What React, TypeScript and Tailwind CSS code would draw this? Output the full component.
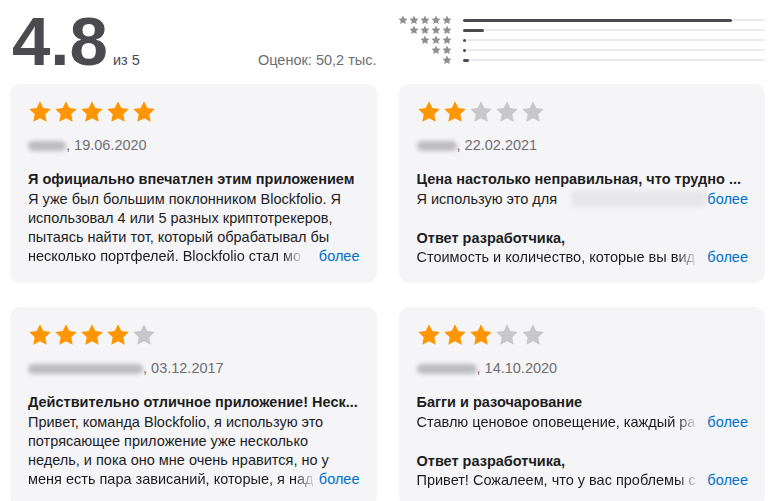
import React from 'react';

const ORANGE = '#ff9500';
const GRAY_STAR = '#c7c7cc';

const Star: React.FC<{ size: number; color: string }> = ({ size, color }) => (
  <svg width={size} height={size} viewBox="0 0 24 24" className="shrink-0">
    <path
      d="M12 1.2l3.3 6.9 7.5 1-5.5 5.2 1.4 7.5L12 18.2l-6.7 3.6 1.4-7.5L1.2 9.1l7.5-1z"
      fill={color}
    />
  </svg>
);

const Stars: React.FC<{ rating: number }> = ({ rating }) => (
  <div className="flex gap-[2px]">
    {[1, 2, 3, 4, 5].map(i => (
      <Star key={i} size={24} color={i <= rating ? ORANGE : GRAY_STAR} />
    ))}
  </div>
);

const histogram = [
  { stars: 5, pct: 89 },
  { stars: 4, pct: 7 },
  { stars: 3, pct: 1 },
  { stars: 2, pct: 1 },
  { stars: 1, pct: 2 },
];

// blurred nickname placeholder
const Nick: React.FC<{ w: number }> = ({ w }) => (
  <span
    className="inline-block h-[10px] rounded-full bg-[#bcbcc1] blur-[2px] align-middle"
    style={{ width: w }}
  />
);

const More: React.FC = () => <span className="text-[#0070c9] shrink-0">более</span>;

// last visible line: text fades out, then "более"
const FadeLine: React.FC<{ text: string }> = ({ text }) => (
  <div className="flex">
    <span className="shrink-0 whitespace-nowrap [mask-image:linear-gradient(to_right,black_calc(100%-18px),rgba(0,0,0,0.15))]">
      {text}
    </span>
    <span className="flex-1" />
    <More />
  </div>
);

interface Review {
  rating: number;
  nick: number;
  date: string;
  title: string;
  lines?: string[];
  last?: React.ReactNode;
  reply?: string;
}

const reviews: Review[] = [
  {
    rating: 5,
    nick: 38,
    date: '19.06.2020',
    title: 'Я официально впечатлен этим приложением',
    lines: [
      'Я уже был большим поклонником Blockfolio. Я',
      'использовал 4 или 5 разных криптотрекеров,',
      'пытаясь найти тот, который обрабатывал бы',
    ],
    last: <FadeLine text="несколько портфелей. Blockfolio стал мо" />,
  },
  {
    rating: 2,
    nick: 40,
    date: '22.02.2021',
    title: 'Цена настолько неправильная, что трудно ...',
    last: (
      <div className="flex items-center">
        <span className="whitespace-nowrap">Я использую это для</span>
        <span className="ml-[15px] h-[16px] w-[134px] bg-[#e6e6e9] blur-[2px]" />
        <span className="flex-1" />
        <More />
      </div>
    ),
    reply: 'Стоимость и количество, которые вы вид',
  },
  {
    rating: 4,
    nick: 115,
    date: '03.12.2017',
    title: 'Действительно отличное приложение! Неск...',
    lines: [
      'Привет, команда Blockfolio, я использую это',
      'потрясающее приложение уже несколько',
      'недель, и пока оно мне очень нравится, но у',
    ],
    last: <FadeLine text="меня есть пара зависаний, которые, я над" />,
  },
  {
    rating: 3,
    nick: 60,
    date: '14.10.2020',
    title: 'Багги и разочарование',
    last: <FadeLine text="Ставлю ценовое оповещение, каждый ра" />,
    reply: 'Привет! Сожалеем, что у вас проблемы с',
  },
];

const ReviewCard: React.FC<{ r: Review }> = ({ r }) => (
  <div className="h-[199px] rounded-[10px] bg-[#f5f5f7] pl-[18px] pr-[17px] pt-[16px] text-[14.5px] leading-[19.3px] text-[#1d1d1f]">
    <Stars rating={r.rating} />
    <div className="mt-[12px] flex items-center text-[#6e6e73]">
      <Nick w={r.nick} />
      <span>, {r.date}</span>
    </div>
    <div className="mt-[15px] font-bold whitespace-nowrap">{r.title}</div>
    {r.lines?.map(l => (
      <div key={l} className="whitespace-nowrap">{l}</div>
    ))}
    {r.last}
    {r.reply && (
      <>
        <div className="mt-[20px] font-bold">Ответ разработчика,</div>
        <FadeLine text={r.reply} />
      </>
    )}
  </div>
);

export default function App() {
  return (
    <div className="h-[501px] w-[775px] overflow-hidden bg-white px-[10px] font-['Liberation_Sans',Arial,sans-serif]">
      <div className="grid h-[84px] grid-cols-2 gap-x-[22px]">
        <div className="flex items-end pb-[15px]">
          <span className="ml-[2px] text-[69px] font-bold leading-[54px] text-[#4a4a4f]">4.8</span>
          <span className="ml-[5px] mb-[-3px] text-[14.5px] text-[#4a4a4f]">из 5</span>
          <span className="flex-1" />
          <span className="mb-[-3px] text-[14.5px] text-[#6e6e73]">Оценок: 50,2 тыс.</span>
        </div>
        <div className="flex flex-col pt-[15px]">
          {histogram.map(h => (
            <div key={h.stars} className="flex h-[10px] items-center">
              <div className="flex w-[53px] justify-end">
                {Array.from({ length: h.stars }).map((_, i) => (
                  <span key={i} className="ml-[1px]">
                    <Star size={10} color="#8e8e93" />
                  </span>
                ))}
              </div>
              <div className="relative ml-[11px] h-[2px] flex-1 bg-[#ebebef]">
                <div
                  className="absolute left-0 top-[-0.5px] h-[3px] rounded-full bg-[#4a4a4f]"
                  style={{ width: `${h.pct}%`, minWidth: 3 }}
                />
              </div>
            </div>
          ))}
        </div>
      </div>
      <div className="grid grid-cols-2 gap-x-[22px] gap-y-[24px]">
        {reviews.map((r, i) => (
          <ReviewCard key={i} r={r} />
        ))}
      </div>
    </div>
  );
}
